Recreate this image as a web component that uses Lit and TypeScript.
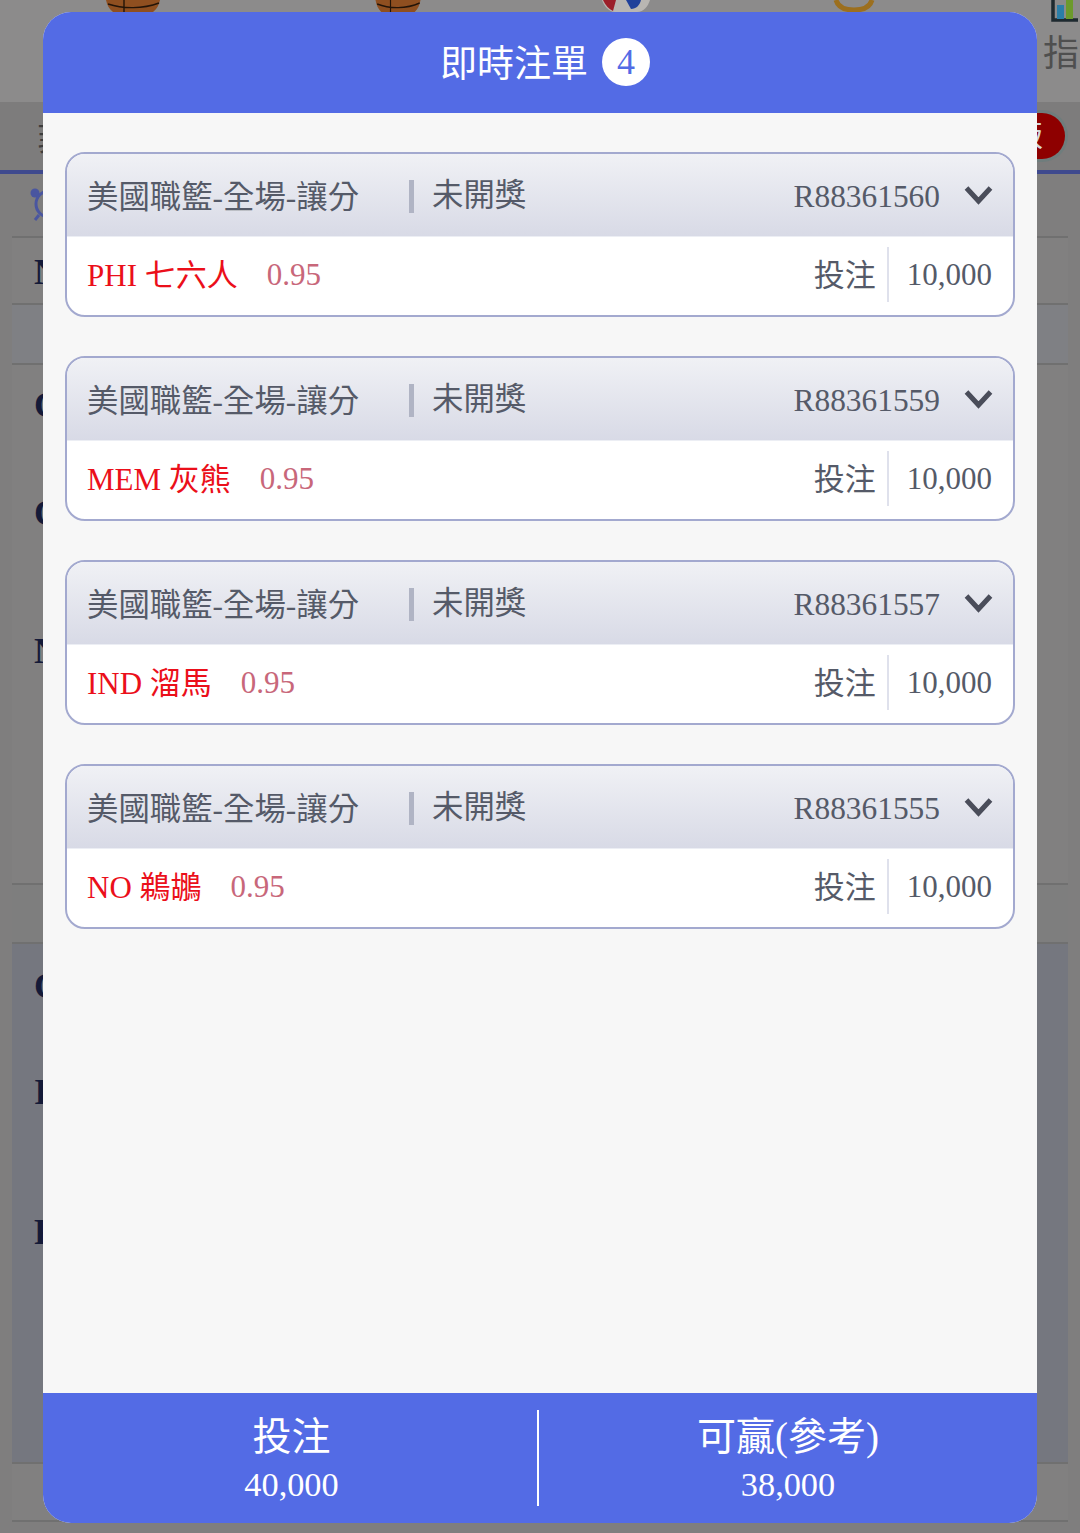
import { LitElement, html, css, svg } from "lit";
import { customElement } from "lit/decorators.js";

const bets = [
  { team: "PHI 七六人", id: "R88361560" },
  { team: "MEM 灰熊", id: "R88361559" },
  { team: "IND 溜馬", id: "R88361557" },
  { team: "NO 鵜鶘", id: "R88361555" },
];

const ball = (w: number) => svg`
  <svg class="nav-ico" viewBox="0 0 60 12" width="${w}" height="12" preserveAspectRatio="none">
    <path d="M3 0 C4 5 6 9 10 12 H50 C54 9 56 5 57 0 Z" fill="#8f4f20"/>
    <path d="M5 4 C20 9 40 9 56 3 M21 0 V12" stroke="#231408" stroke-width="1.4" fill="none"/>
  </svg>`;

@customElement("app-root")
export class AppRoot extends LitElement {
  static styles = css`
    :host {
      display: block;
      position: relative;
      width: 1080px;
      height: 1533px;
      overflow: hidden;
      background: #7f7e7e;
      font-family: "Liberation Serif", "Noto Sans CJK TC", serif;
    }
    .nav {
      height: 102px;
      box-sizing: border-box;
      background: #8c8b8b;
      display: flex;
    }
    .nav-ico { display: block; }
    .slot-a { margin-left: 103px; width: 270px; }
    .slot-b { width: 228px; }
    .slot-c { width: 232px; }
    .slot-d { width: 210px; }
    .slot-e {
      width: 35px;
      display: flex;
      flex-direction: column;
      color: #4f4f4f;
      font-size: 36px;
      line-height: 50px;
    }
    .slot-e svg { display: block; margin: 0 0 9px 8px; }
    .slot-e span { white-space: nowrap; margin-top: -2px; }
    .tabs {
      height: 72px;
      box-sizing: border-box;
      background: #7d7c7c;
      border-bottom: 4px solid #3f4a8e;
      display: flex;
      align-items: center;
      justify-content: space-between;
      padding-right: 15px;
    }
    .tab-text { margin-left: 37px; font-size: 32px; color: #3d3d3d; }
    .pill {
      height: 46px;
      width: 76px;
      box-sizing: border-box;
      border-radius: 23px;
      background: #8e0000;
      box-shadow: 0 0 0 3px #6f7d7d;
      color: #d8d8d8;
      font-size: 30px;
      line-height: 46px;
      text-align: right;
      padding-right: 22px;
    }
    .alarm { height: 62px; padding: 14px 0 0 29px; box-sizing: border-box; }
    .alarm svg { display: block; }
    .rows { margin: 0 12px; }
    .row {
      box-sizing: border-box;
      border-top: 2px solid #707070;
      background: #818080;
      padding-left: 22px;
      color: #141a38;
      font-size: 36px;
      font-weight: 700;
      line-height: 40px;
    }
    .r1 { height: 67px; padding-top: 14px; }
    .r2 { height: 60px; background: #7f8084; }
    .r3 { height: 520px; padding-top: 20px; }
    .r4 { height: 59px; background: #7e7e7e; }
    .r5 { height: 520px; background: #75777f; padding-top: 22px; }
    .r6 { height: 60px; border-bottom: 2px solid #707070; }
    .r3 div:nth-child(2) { margin-top: 68px; }
    .r3 div:nth-child(3) { margin-top: 98px; }
    .r5 div:nth-child(2) { margin-top: 66px; }
    .r5 div:nth-child(3) { margin-top: 100px; }

    .modal {
      position: absolute;
      left: 43px;
      top: 12px;
      width: 994px;
      height: 1511px;
      border-radius: 28px;
      overflow: hidden;
      background: #f7f7f7;
      display: flex;
      flex-direction: column;
      color: #555a68;
      font-size: 31.4px;
    }
    .head {
      height: 101px;
      flex: none;
      background: #536be5;
      color: #fff;
      display: flex;
      align-items: center;
      justify-content: center;
      gap: 14px;
      font-size: 37px;
      padding: 2px 0 0 10px;
      box-sizing: border-box;
    }
    .title { margin-bottom: 6px; }
    .count {
      width: 48px;
      height: 48px;
      border-radius: 50%;
      background: #fff;
      color: #536be5;
      display: flex;
      align-items: center;
      justify-content: center;
      font-size: 36px;
      margin-bottom: 3px;
    }
    .list {
      flex: 1;
      padding: 39px 22px 0;
      display: flex;
      flex-direction: column;
      gap: 39px;
    }
    .card {
      height: 165px;
      box-sizing: border-box;
      border: 2px solid #a3a9cf;
      border-radius: 20px;
      overflow: hidden;
      background: #fff;
    }
    .c-head {
      height: 82px;
      box-sizing: border-box;
      background: linear-gradient(#f0f1f5, #d8dae6);
      display: flex;
      align-items: center;
      padding: 3px 20px 0;
    }
    .market { width: 322px; white-space: nowrap; margin-bottom: 4px; }
    .bar { width: 5px; height: 33px; background: #b0b4c4; margin-right: 18px; }
    .status { flex: 1; margin-bottom: 8px; }
    .chev { margin-left: 24px; display: block; margin-bottom: 4px; }
    .c-foot {
      height: 79px;
      box-sizing: border-box;
      border-top: 1px solid #eceef4;
      display: flex;
      align-items: center;
      padding: 0 21px 3px 20px;
      font-size: 31px;
    }
    .team { color: #eb0f1a; white-space: nowrap; margin-bottom: 4px; }
    .odds { color: #c8677a; margin-left: 29px; flex: 1; }
    .stake-label { margin-bottom: 4px; }
    .stake-sep {
      width: 2px;
      height: 55px;
      background: #dfe1ec;
      margin: 0 18px 0 11px;
    }
    .foot {
      height: 130px;
      flex: none;
      background: #536be5;
      color: #fff;
      display: flex;
      align-items: center;
    }
    .cell {
      box-sizing: border-box;
      text-align: center;
      height: 96px;
      display: flex;
      flex-direction: column;
      align-items: center;
      font-size: 39px;
      line-height: 54px;
    }
    .cell small { font-size: 34.3px; line-height: 40px; }
    .cell.left { width: 496px; padding-left: 3px; border-right: 2px solid #fff; }
    .cell.right { flex: 1; }
  `;

  render() {
    return html`
      <div class="nav">
        <div class="slot-a">${ball(60)}</div>
        <div class="slot-b">${ball(50)}</div>
        <div class="slot-c">
          <svg class="nav-ico" viewBox="0 0 50 12" width="50" height="12">
            <path d="M1 0 C3 6 8 12 14 12 H36 C43 12 47 6 49 0 Z" fill="#b9b6b2"/>
            <path d="M2 0 C4 5 8 9 12 11 L15 0 Z" fill="#9c1f2a"/>
            <path d="M25 0 L40 0 C39 5 35 9 30 9 Z" fill="#20409a"/>
          </svg>
        </div>
        <div class="slot-d">
          <svg class="nav-ico" viewBox="0 0 42 12" width="42" height="12">
            <path d="M3 0 C5 7 12 10 21 10 C30 10 37 7 39 0" fill="none" stroke="#9c6f1e" stroke-width="5"/>
          </svg>
        </div>
        <div class="slot-e">
          <svg viewBox="0 0 27 22" width="27" height="22">
            <path d="M2 0 V20 H27" fill="none" stroke="#1e2a30" stroke-width="3.5"/>
            <rect x="6" y="5" width="7" height="14" fill="#2b7ea8"/>
            <rect x="15" y="0" width="7" height="19" fill="#6c9a2c"/>
          </svg>
          <span>指</span>
        </div>
      </div>
      <div class="tabs">
        <span class="tab-text">菲</span>
        <div class="pill">版</div>
      </div>
      <div class="alarm">
        <svg viewBox="0 0 34 34" width="34" height="34">
          <circle cx="6" cy="5" r="4.5" fill="#4a56a0"/>
          <circle cx="20" cy="16" r="13" fill="none" stroke="#4a56a0" stroke-width="3"/>
          <path d="M10 27 L6 32" stroke="#4a56a0" stroke-width="3"/>
        </svg>
      </div>
      <div class="rows">
        <div class="row r1">N</div>
        <div class="row r2"></div>
        <div class="row r3"><div>C</div><div>C</div><div>N</div></div>
        <div class="row r4"></div>
        <div class="row r5"><div>C</div><div>I</div><div>F</div></div>
        <div class="row r6"></div>
      </div>

      <div class="modal">
        <div class="head"><span class="title">即時注單</span><span class="count">4</span></div>
        <div class="list">
          ${bets.map(
            (b) => html`
              <div class="card">
                <div class="c-head">
                  <span class="market">美國職籃-全場-讓分</span>
                  <span class="bar"></span>
                  <span class="status">未開獎</span>
                  <span>${b.id}</span>
                  <svg class="chev" viewBox="0 0 29 20" width="29" height="20">
                    <path d="M2.5 3 L14.5 16 L26.5 3" fill="none" stroke="#4a4d5a" stroke-width="5"/>
                  </svg>
                </div>
                <div class="c-foot">
                  <span class="team">${b.team}</span>
                  <span class="odds">0.95</span>
                  <span class="stake-label">投注</span>
                  <span class="stake-sep"></span>
                  <span>10,000</span>
                </div>
              </div>
            `
          )}
        </div>
        <div class="foot">
          <div class="cell left"><span>投注</span><small>40,000</small></div>
          <div class="cell right"><span>可贏(參考)</span><small>38,000</small></div>
        </div>
      </div>
    `;
  }
}
